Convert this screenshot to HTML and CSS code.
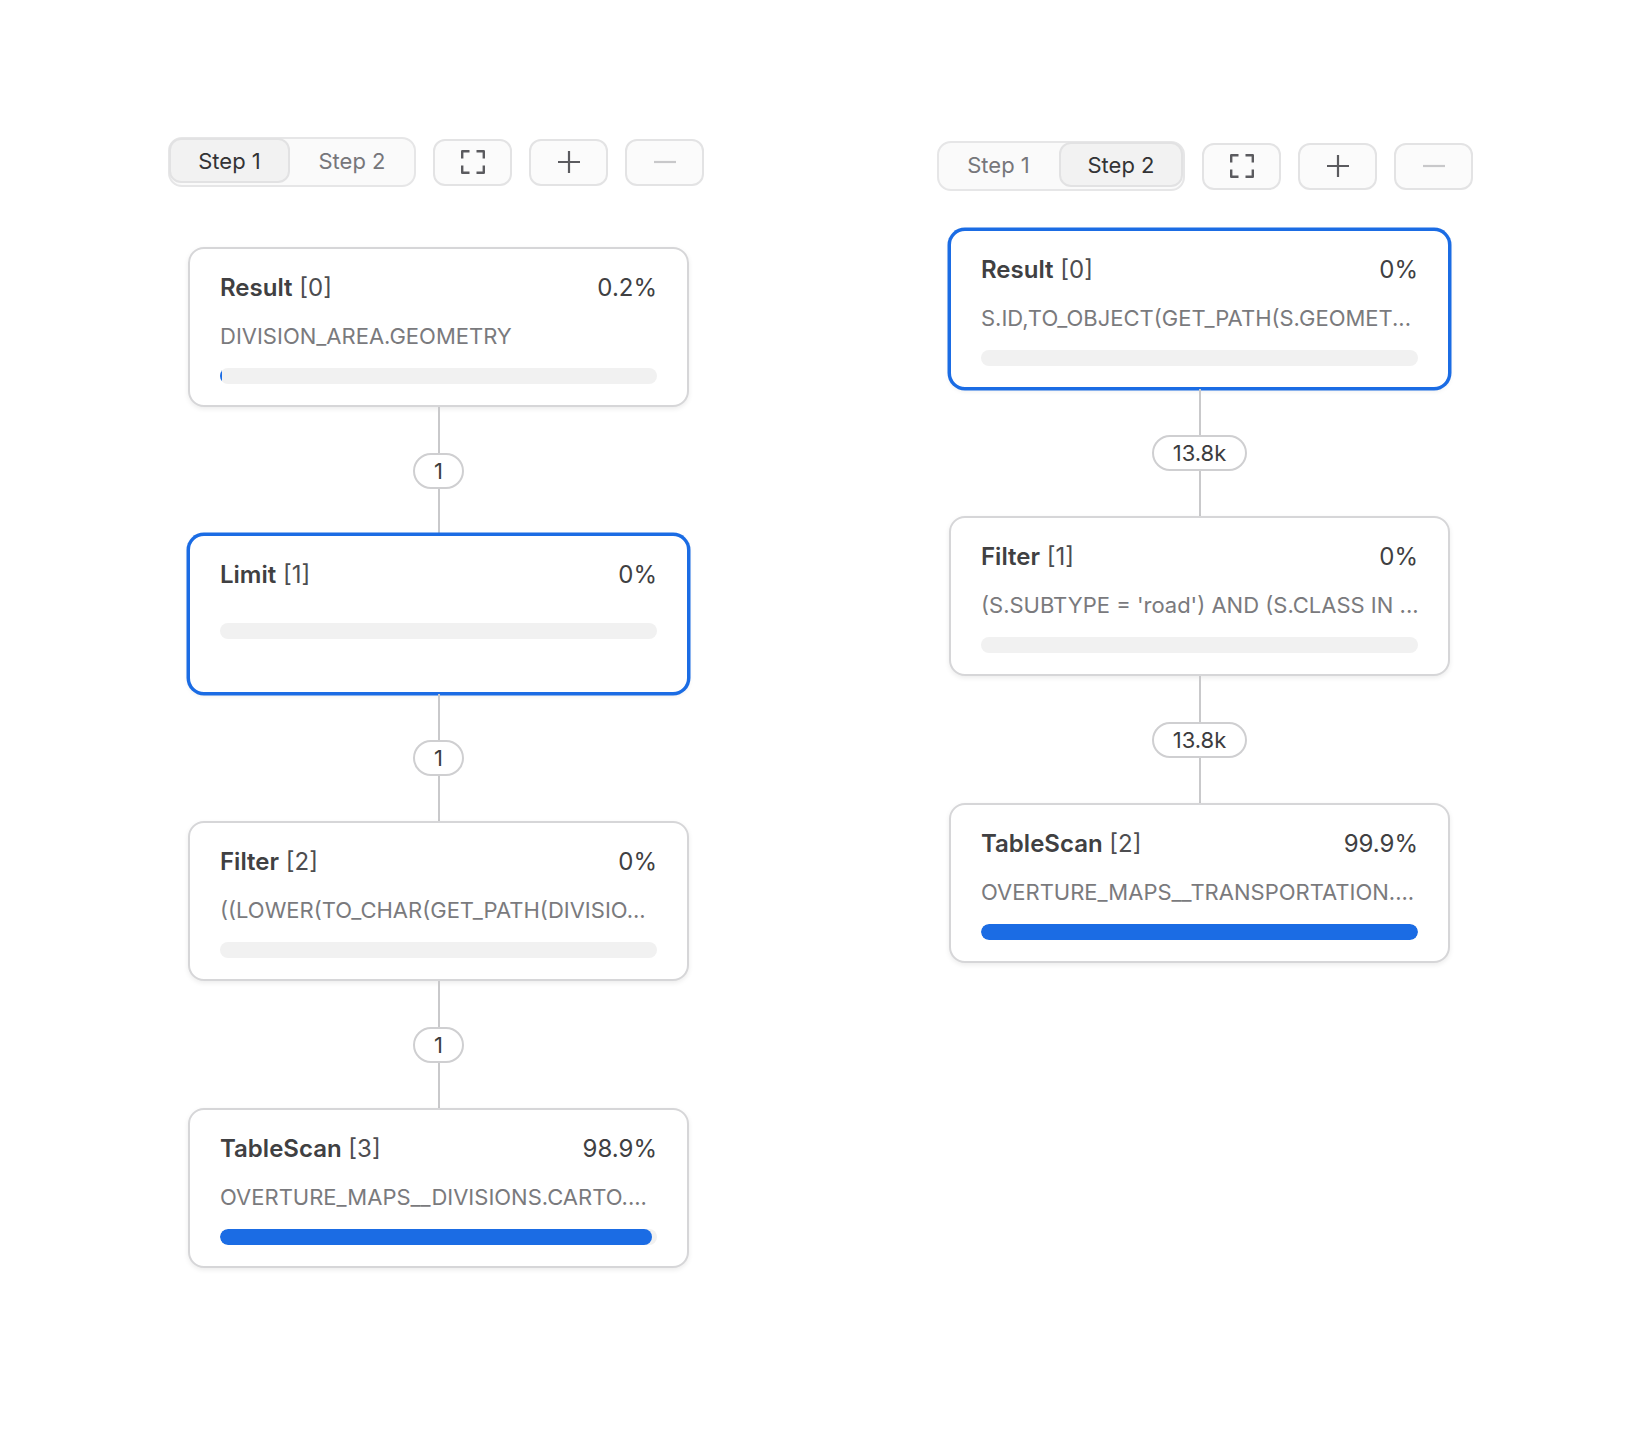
FILE: index.html
```html
<!DOCTYPE html>
<html lang="en">
<head>
<meta charset="utf-8">
<title>Query plan</title>
<link rel="stylesheet" href="styles.css">
</head>
<body>
<div class="page">
  <section class="panel panel-a">
    <div class="toolbar">
      <div class="segmented">
        <button class="seg seg-active">Step 1</button>
        <button class="seg">Step 2</button>
      </div>
      <button class="tool" aria-label="Fit">
        <svg width="24" height="24" viewBox="0 0 24 24"><path d="M1.2 8.5V1.2h7.3M15.5 1.2h7.3v7.3M22.8 15.5v7.3h-7.3M8.5 22.8H1.2v-7.3" fill="none" stroke="#5b5b5f" stroke-width="2.4" stroke-linejoin="round"/></svg>
      </button>
      <button class="tool" aria-label="Zoom in">
        <svg width="24" height="24" viewBox="0 0 24 24"><path d="M12 1v22M1 12h22" fill="none" stroke="#5b5b5f" stroke-width="2.2"/></svg>
      </button>
      <button class="tool" aria-label="Zoom out">
        <svg width="24" height="24" viewBox="0 0 24 24"><path d="M1 12h22" fill="none" stroke="#c8c8ca" stroke-width="2.2"/></svg>
      </button>
    </div>
    <div class="graph">
      <div class="node">
        <div class="node-head"><span class="node-title"><b>Result</b> [0]</span><span class="node-pct">0.2%</span></div>
        <div class="node-sub">DIVISION_AREA.GEOMETRY</div>
        <div class="bar"><div class="fill" style="width:0.4%"></div></div>
      </div>
      <div class="edge"><span class="line"></span><span class="badge">1</span><span class="line"></span></div>
      <div class="node node-selected">
        <div class="node-head"><span class="node-title"><b>Limit</b> [1]</span><span class="node-pct">0%</span></div>
        <div class="node-sub"></div>
        <div class="bar"><div class="fill" style="width:0%"></div></div>
      </div>
      <div class="edge"><span class="line"></span><span class="badge">1</span><span class="line"></span></div>
      <div class="node">
        <div class="node-head"><span class="node-title"><b>Filter</b> [2]</span><span class="node-pct">0%</span></div>
        <div class="node-sub">((LOWER(TO_CHAR(GET_PATH(DIVISIO...</div>
        <div class="bar"><div class="fill" style="width:0%"></div></div>
      </div>
      <div class="edge"><span class="line"></span><span class="badge">1</span><span class="line"></span></div>
      <div class="node">
        <div class="node-head"><span class="node-title"><b>TableScan</b> [3]</span><span class="node-pct">98.9%</span></div>
        <div class="node-sub">OVERTURE_MAPS__DIVISIONS.CARTO....</div>
        <div class="bar"><div class="fill" style="width:98.9%"></div></div>
      </div>
    </div>
  </section>

  <section class="panel panel-b">
    <div class="toolbar">
      <div class="segmented">
        <button class="seg">Step 1</button>
        <button class="seg seg-active">Step 2</button>
      </div>
      <button class="tool" aria-label="Fit">
        <svg width="24" height="24" viewBox="0 0 24 24"><path d="M1.2 8.5V1.2h7.3M15.5 1.2h7.3v7.3M22.8 15.5v7.3h-7.3M8.5 22.8H1.2v-7.3" fill="none" stroke="#5b5b5f" stroke-width="2.4" stroke-linejoin="round"/></svg>
      </button>
      <button class="tool" aria-label="Zoom in">
        <svg width="24" height="24" viewBox="0 0 24 24"><path d="M12 1v22M1 12h22" fill="none" stroke="#5b5b5f" stroke-width="2.2"/></svg>
      </button>
      <button class="tool" aria-label="Zoom out">
        <svg width="24" height="24" viewBox="0 0 24 24"><path d="M1 12h22" fill="none" stroke="#c8c8ca" stroke-width="2.2"/></svg>
      </button>
    </div>
    <div class="graph">
      <div class="node node-selected">
        <div class="node-head"><span class="node-title"><b>Result</b> [0]</span><span class="node-pct">0%</span></div>
        <div class="node-sub">S.ID,TO_OBJECT(GET_PATH(S.GEOMET...</div>
        <div class="bar"><div class="fill" style="width:0%"></div></div>
      </div>
      <div class="edge"><span class="line"></span><span class="badge">13.8k</span><span class="line"></span></div>
      <div class="node">
        <div class="node-head"><span class="node-title"><b>Filter</b> [1]</span><span class="node-pct">0%</span></div>
        <div class="node-sub">(S.SUBTYPE = 'road') AND (S.CLASS IN ...</div>
        <div class="bar"><div class="fill" style="width:0%"></div></div>
      </div>
      <div class="edge"><span class="line"></span><span class="badge">13.8k</span><span class="line"></span></div>
      <div class="node">
        <div class="node-head"><span class="node-title"><b>TableScan</b> [2]</span><span class="node-pct">99.9%</span></div>
        <div class="node-sub">OVERTURE_MAPS__TRANSPORTATION....</div>
        <div class="bar"><div class="fill" style="width:100%"></div></div>
      </div>
    </div>
  </section>
</div>
</body>
</html>
```

FILE: styles.css
```css
* { box-sizing: border-box; }

html, body {
  margin: 0;
  padding: 0;
  background: #ffffff;
}

body {
  font-family: Inter, "Noto Sans", "Liberation Sans", sans-serif;
  color: #3c3c3e;
  width: 1648px;
  height: 1438px;
  overflow: hidden;
}

.page {
  display: flex;
  align-items: flex-start;
  padding-left: 168px;
}

.panel {
  display: flex;
  flex-direction: column;
}

.panel-a {
  width: 769px;
  padding-top: 137px;
}

.panel-b {
  padding-top: 141px;
}

/* toolbar */
.toolbar {
  display: flex;
  align-items: center;
  height: 50px;
}

.segmented {
  display: flex;
  height: 50px;
  width: 248px;
  border: 2px solid #e6e6e7;
  border-radius: 14px;
  background: #fafafa;
  padding: 0 1px 3px 0;
  margin-right: 17px;
}

.seg {
  flex: 0 0 auto;
  width: 121px;
  height: 45px;
  margin: -1px 0 0 -1px;
  border: 2px solid transparent;
  border-radius: 12px;
  background: transparent;
  font-family: inherit;
  font-size: 22px;
  color: #76767a;
  padding: 0;
  line-height: 40px;
}

.seg + .seg {
  width: 124px;
  margin-left: 0;
}

.seg-active {
  background: #f2f2f2;
  border-color: #e2e2e3;
  color: #333335;
}

.tool {
  width: 79px;
  height: 47px;
  margin-right: 17px;
  border: 2px solid #e3e3e4;
  border-radius: 12px;
  background: #fbfbfb;
  padding: 0;
  display: flex;
  align-items: center;
  justify-content: center;
}

.tool svg { display: block; }

/* graph */
.graph {
  display: flex;
  flex-direction: column;
  width: 501px;
}

.panel-a .graph {
  margin-top: 60px;
  margin-left: 20px;
}

.panel-b .graph {
  margin-top: 38px;
  margin-left: 12px;
}

.node {
  height: 160px;
  border: 2px solid #d6d6d8;
  border-radius: 16px;
  background: #ffffff;
  box-shadow: 0 2px 5px rgba(0, 0, 0, 0.08);
  padding: 23px 30px 0 30px;
  display: flex;
  flex-direction: column;
  gap: 16px;
}

.node-selected {
  border-color: #1b6ce4;
  box-shadow: 0 0 0 1.5px #1b6ce4, 0 2px 5px rgba(0, 0, 0, 0.08);
}

.node-head {
  display: flex;
  justify-content: space-between;
  align-items: baseline;
  height: 32px;
  line-height: 32px;
  font-size: 24px;
}

.node-title {
  color: #4d4d50;
  font-weight: 400;
}

.node-title b {
  font-weight: 600;
  color: #404042;
}

.node-pct {
  color: #404042;
}

.node-sub {
  font-size: 22px;
  line-height: 32px;
  color: #7a7a7d;
  white-space: nowrap;
  overflow: hidden;
}

.node-sub:empty {
  height: 0;
}

.bar {
  height: 16px;
  border-radius: 8px;
  background: #f1f1f1;
  overflow: hidden;
  flex: 0 0 auto;
}

.fill {
  height: 100%;
  background: #1b6ce4;
  border-radius: 8px;
}

.edge {
  height: 127px;
  display: flex;
  flex-direction: column;
  align-items: center;
}

.line {
  flex: 1 1 0;
  width: 2px;
  background: #c9c9cb;
}

.badge {
  height: 36px;
  padding: 0 19px;
  border: 2px solid #cfcfd1;
  border-radius: 18px;
  background: #ffffff;
  font-size: 22px;
  line-height: 32px;
  color: #3c3c3e;
}
```
